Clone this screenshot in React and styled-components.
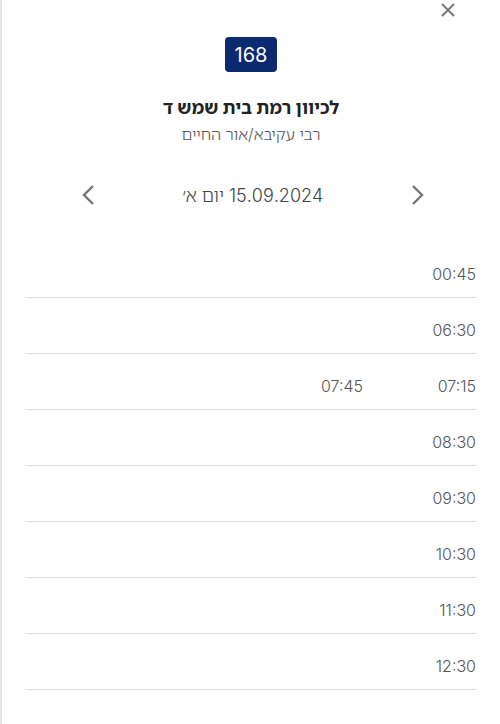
import React from 'react'
import styled, { createGlobalStyle } from 'styled-components'

const GlobalStyle = createGlobalStyle`
  html, body {
    margin: 0;
    padding: 0;
    background: #fff;
  }
  body {
    font-family: Inter, "Noto Sans Hebrew", "Noto Sans", "DejaVu Sans", sans-serif;
  }
`

const departures = [
    ['00:45'],
    ['06:30'],
    ['07:15', '07:45'],
    ['08:30'],
    ['09:30'],
    ['10:30'],
    ['11:30'],
    ['12:30'],
]

const App = () => {
    return (
        <>
            <GlobalStyle />
            <Panel dir="rtl">
                <TopBar>
                    <CloseButton aria-label="סגור">
                        <svg width="14" height="14" viewBox="0 0 14 14">
                            <path d="M1 1 L13 13 M13 1 L1 13" stroke="#757575" strokeWidth="1.8" fill="none" />
                        </svg>
                    </CloseButton>
                </TopBar>
                <Badge>168</Badge>
                <Title>לכיוון רמת בית שמש ד</Title>
                <Subtitle>רבי עקיבא/אור החיים</Subtitle>
                <DateNav>
                    <NavButton aria-label="הבא">
                        <svg width="14" height="22" viewBox="0 0 14 22">
                            <path d="M2 2 L11 11 L2 20" stroke="#757575" strokeWidth="2.4" fill="none" />
                        </svg>
                    </NavButton>
                    <DateText>15.09.2024 יום א׳</DateText>
                    <NavButton aria-label="הקודם">
                        <svg width="14" height="22" viewBox="0 0 14 22">
                            <path d="M12 2 L3 11 L12 20" stroke="#757575" strokeWidth="2.4" fill="none" />
                        </svg>
                    </NavButton>
                </DateNav>
                <TimeList>
                    {departures.map(row => (
                        <TimeRow key={row[0]}>
                            {row.map(time => (
                                <Time key={time}>{time}</Time>
                            ))}
                        </TimeRow>
                    ))}
                </TimeList>
            </Panel>
        </>
    )
}

export default App

const Panel = styled.div`
    box-sizing: border-box;
    min-height: 724px;
    border-left: 2px solid #e2e2e2;
    padding: 0 24px;
    display: flex;
    flex-direction: column;
    align-items: center;
    color: #333;
`

const TopBar = styled.div`
    align-self: stretch;
    display: flex;
    justify-content: flex-start;
    padding: 3px 21px 0 0;
    height: 37px;
    box-sizing: border-box;
`

const CloseButton = styled.button`
    border: none;
    background: none;
    padding: 0;
    width: 14px;
    height: 14px;
    display: flex;
    cursor: pointer;
`

const Badge = styled.div`
    box-sizing: border-box;
    width: 52px;
    height: 35px;
    border-radius: 4px;
    background: #0b2a6f;
    color: #fff;
    font-size: 20px;
    font-weight: 400;
    display: flex;
    align-items: center;
    justify-content: center;
`

const Title = styled.h1`
    margin: 25px 0 0;
    font-size: 18px;
    font-weight: 700;
    line-height: 22px;
    color: #222;
`

const Subtitle = styled.div`
    margin-top: 5px;
    font-size: 16px;
    font-weight: 300;
    line-height: 20px;
    color: #555;
`

const DateNav = styled.div`
    align-self: stretch;
    display: flex;
    align-items: center;
    justify-content: space-between;
    margin-top: 39px;
    padding: 0 51px 0 55px;
    height: 24px;
`

const NavButton = styled.button`
    border: none;
    background: none;
    padding: 0;
    display: flex;
    cursor: pointer;
`

const DateText = styled.div`
    font-size: 18px;
    font-weight: 300;
    color: #444;
`

const TimeList = styled.div`
    align-self: stretch;
    margin-top: 35px;
`

const TimeRow = styled.div`
    box-sizing: border-box;
    display: grid;
    grid-template-columns: repeat(4, 113px);
    align-items: center;
    height: 56px;
    padding-top: 8px;
    border-bottom: 1px solid #dedede;
`

const Time = styled.span`
    font-size: 16px;
    font-weight: 300;
    color: #555;
    text-align: right;
`
